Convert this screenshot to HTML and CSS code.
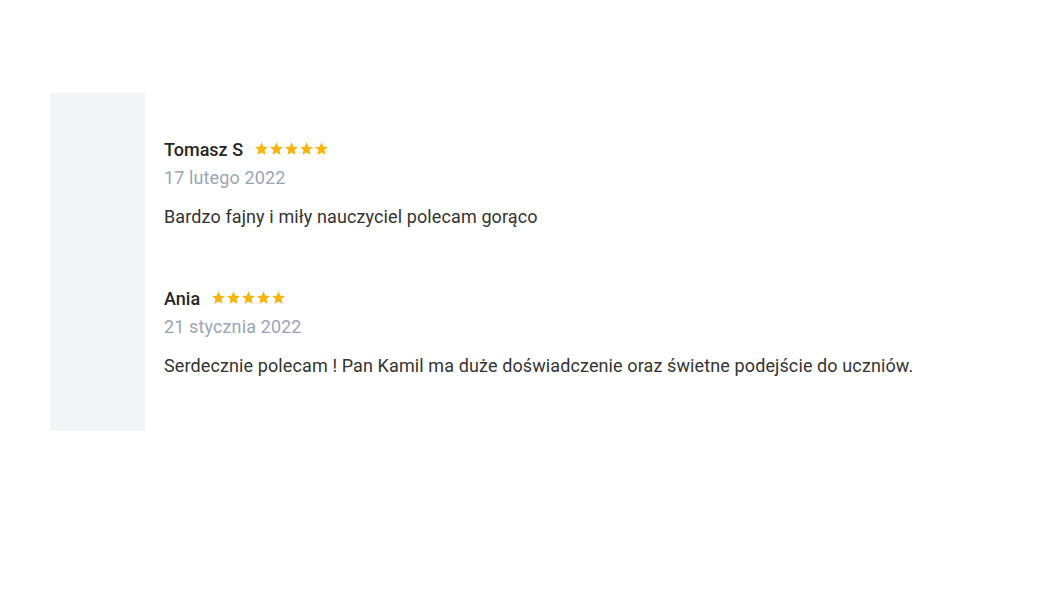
FILE: index.html
```html
<!DOCTYPE html>
<html lang="pl">
<head>
<meta charset="utf-8">
<link rel="stylesheet" href="styles.css">
</head>
<body>
<div class="wrap">
  <div class="side"></div>
  <div class="reviews">
    <div class="review">
      <div class="head">
        <span class="name">Tomasz S</span>
        <span class="stars">
          <svg viewBox="2 2 20 19.5"><path d="M12 2l2.9 6.9 7.1.6-5.4 4.7 1.6 7.3L12 17.8 5.8 21.5l1.6-7.3L2 9.5l7.1-.6z"/></svg>
          <svg viewBox="2 2 20 19.5"><path d="M12 2l2.9 6.9 7.1.6-5.4 4.7 1.6 7.3L12 17.8 5.8 21.5l1.6-7.3L2 9.5l7.1-.6z"/></svg>
          <svg viewBox="2 2 20 19.5"><path d="M12 2l2.9 6.9 7.1.6-5.4 4.7 1.6 7.3L12 17.8 5.8 21.5l1.6-7.3L2 9.5l7.1-.6z"/></svg>
          <svg viewBox="2 2 20 19.5"><path d="M12 2l2.9 6.9 7.1.6-5.4 4.7 1.6 7.3L12 17.8 5.8 21.5l1.6-7.3L2 9.5l7.1-.6z"/></svg>
          <svg viewBox="2 2 20 19.5"><path d="M12 2l2.9 6.9 7.1.6-5.4 4.7 1.6 7.3L12 17.8 5.8 21.5l1.6-7.3L2 9.5l7.1-.6z"/></svg>
        </span>
      </div>
      <div class="date">17 lutego 2022</div>
      <p class="text">Bardzo fajny i miły nauczyciel polecam gorąco</p>
    </div>
    <div class="review">
      <div class="head">
        <span class="name">Ania</span>
        <span class="stars">
          <svg viewBox="2 2 20 19.5"><path d="M12 2l2.9 6.9 7.1.6-5.4 4.7 1.6 7.3L12 17.8 5.8 21.5l1.6-7.3L2 9.5l7.1-.6z"/></svg>
          <svg viewBox="2 2 20 19.5"><path d="M12 2l2.9 6.9 7.1.6-5.4 4.7 1.6 7.3L12 17.8 5.8 21.5l1.6-7.3L2 9.5l7.1-.6z"/></svg>
          <svg viewBox="2 2 20 19.5"><path d="M12 2l2.9 6.9 7.1.6-5.4 4.7 1.6 7.3L12 17.8 5.8 21.5l1.6-7.3L2 9.5l7.1-.6z"/></svg>
          <svg viewBox="2 2 20 19.5"><path d="M12 2l2.9 6.9 7.1.6-5.4 4.7 1.6 7.3L12 17.8 5.8 21.5l1.6-7.3L2 9.5l7.1-.6z"/></svg>
          <svg viewBox="2 2 20 19.5"><path d="M12 2l2.9 6.9 7.1.6-5.4 4.7 1.6 7.3L12 17.8 5.8 21.5l1.6-7.3L2 9.5l7.1-.6z"/></svg>
        </span>
      </div>
      <div class="date">21 stycznia 2022</div>
      <p class="text">Serdecznie polecam ! Pan Kamil ma duże doświadczenie oraz świetne podejście do uczniów.</p>
    </div>
  </div>
</div>
</body>
</html>
```
FILE: styles.css
```css
* { box-sizing: border-box; }
html, body { margin: 0; background: #fff; }
body { font-family: Roboto, "Noto Sans", sans-serif; }
.wrap {
  display: flex;
  margin: 93px 0 0 50px;
  height: 338px;
}
.side {
  width: 95px;
  background: #f3f4f8;
  flex: none;
}
.reviews {
  padding: 45px 0 0 19px;
  display: flex;
  flex-direction: column;
  gap: 58px;
}
.review { display: flex; flex-direction: column; }
.head { display: flex; align-items: center; height: 24px; line-height: 24px; }
.name { font-size: 18px; font-weight: 500; color: #262626; }
.stars { display: flex; gap: 2px; margin-left: 12px; margin-top: -3px; }
.stars svg { width: 13px; height: 13px; fill: #f6b40e; }
.date { font-size: 18px; color: #9ba4b6; margin-top: 4px; line-height: 24px; letter-spacing: 0.12px; }
.text { font-size: 18px; color: #333; margin: 15px 0 0; line-height: 24px; letter-spacing: 0.11px; }
```
